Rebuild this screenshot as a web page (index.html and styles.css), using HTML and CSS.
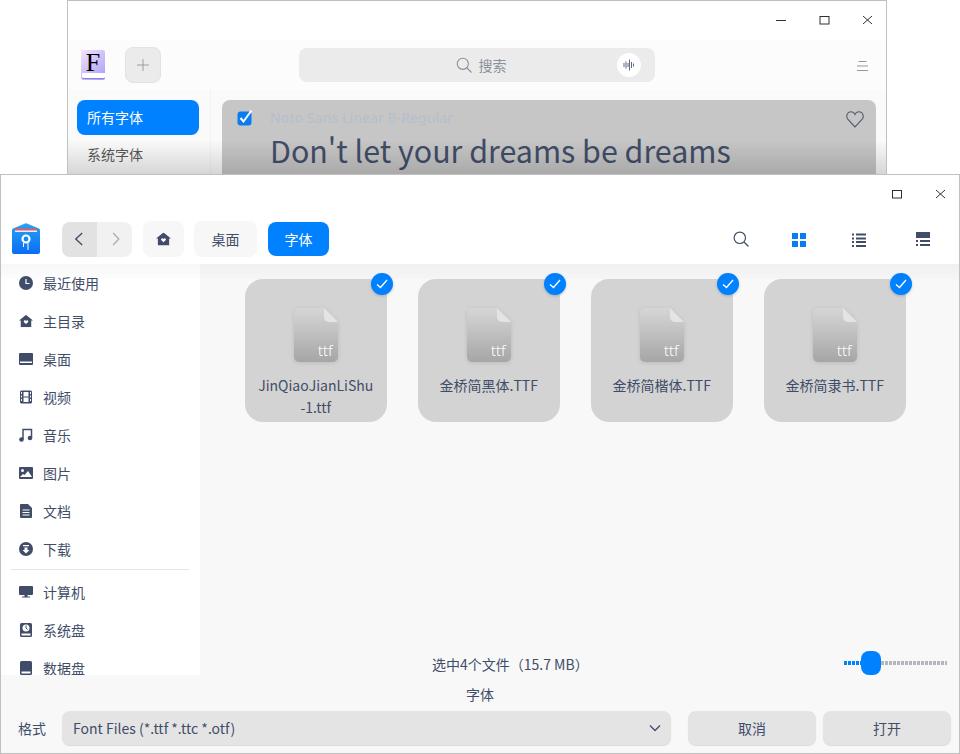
FILE: index.html
```html
<!DOCTYPE html>
<html lang="zh">
<head>
    <meta charset="utf-8">
    <title>字体管理器</title>
    <link rel="stylesheet" href="styles.css">
</head>
<body>
<svg class="defs" width="0" height="0">
    <defs>
        <linearGradient id="ttf-grad" x1="0" y1="0" x2="0" y2="1"><stop offset="0" stop-color="#d6d6d6"/><stop offset="1" stop-color="#a6a6a6"/></linearGradient>
        <linearGradient id="fold" x1="0" y1="0" x2="0" y2="1"><stop offset="0" stop-color="#26a4f0"/><stop offset="1" stop-color="#0a6cf5"/></linearGradient>
    </defs>
    <symbol id="i-home" viewBox="0 0 16 14"><path d="M8 0l8 6.500h-2V14H2V6.500H0Z" fill="#414d68"/><path d="M8 10.500L5.500 8C5 6.500 7 5.500 8 7c1-1.500 3-.5 2.500 1Z" fill="#fff"/></symbol>
    <symbol id="i-ttf" viewBox="0 0 44 54"><path d="M5 0H30L44 14V49a5 5 0 0 1-5 5H5a5 5 0 0 1-5-5V5a5 5 0 0 1 5-5Z" fill="url(#ttf-grad)"/><path d="M30 0L44 14H35a5 5 0 0 1-5-5Z" fill="#e4e4e4"/></symbol>
    <symbol id="i-tick" viewBox="0 0 12 10"><path d="M1 5.500l3.500 3L11 1" fill="none" stroke="#fff" stroke-width="1.300"/></symbol>
</svg>

<div class="window back">
    <div class="titlebar">
        <svg class="winbtn" viewBox="0 0 12 12"><path d="M0 5.500h10" class="st"/></svg>
        <svg class="winbtn" viewBox="0 0 12 12"><rect x="1" y="1.500" width="9" height="7.500" class="st"/></svg>
        <svg class="winbtn" viewBox="0 0 12 12"><path d="M1 1l9 8M10 1l-9 8" class="st"/></svg>
    </div>
    <div class="fm-toolbar">
        <div class="f-logo"><span>F</span></div>
        <div class="add-btn"><svg viewBox="0 0 12 12" width="12" height="12"><path d="M6 0v12M0 6h12" stroke="#9a9ea6" fill="none"/></svg></div>
        <div class="search-box">
            <svg viewBox="0 0 16 16" width="16" height="16"><circle cx="6.800" cy="6.800" r="5.600" fill="none" stroke="#8b919c" stroke-width="1.100"/><path d="M11 11l4.500 4.500" stroke="#8b919c" stroke-width="1.100"/></svg>
            <span>搜索</span>
            <div class="voice"><svg viewBox="0 0 12 12" width="12" height="12"><path d="M1 4v4M3 2.500v7M5 4v4M6.500 0.500v11M8.500 3v6M10.500 4.500v3" stroke="#5f6b80" fill="none"/></svg></div>
        </div>
        <svg class="menu-icon" viewBox="0 0 12 12" width="12" height="12"><path d="M1.500 1.500h8M0 6h11M0 10.500h11" stroke="#9398a2" fill="none"/></svg>
    </div>
    <div class="fm-body">
        <div class="fm-side">
            <div class="fm-item active">所有字体</div>
            <div class="fm-item">系统字体</div>
        </div>
        <div class="fm-main">
            <div class="font-card">
                <svg class="check" viewBox="0 0 16 16" width="16" height="17"><rect x="0.500" y="2" width="14" height="14" rx="3" fill="#0a7cf0"/><path d="M3.500 8.500l3 3.500L14.500 1" stroke="#fff" stroke-width="2" fill="none"/></svg>
                <div class="font-name">Noto Sans Linear B-Regular</div>
                <div class="font-demo">Don't let your dreams be dreams</div>
                <svg class="heart" viewBox="0 0 18 18" width="18" height="18"><path d="M9 17L2 9.500C0 7 0.500 3.500 3 2.200 5.300 1 7.800 2 9 4.500 10.200 2 12.700 1 15 2.200 17.500 3.500 18 7 16 9.500Z" fill="none" stroke="#555b6e" stroke-width="1.100"/></svg>
            </div>
        </div>
        <div class="fm-shade"></div>
    </div>
</div>

<div class="window front">
    <div class="titlebar front-title">
        <svg class="winbtn" viewBox="0 0 12 12"><rect x="1.500" y="1.500" width="9" height="7.500" class="st"/></svg>
        <svg class="winbtn" viewBox="0 0 12 12"><path d="M1 1l9 8M10 1l-9 8" class="st"/></svg>
    </div>
    <div class="toolbar">
        <svg class="app-icon" viewBox="0 0 28 31" width="28" height="31">
            <path d="M0 7Q0 6 1 5.500L13 0.500Q14 0 15 0.500L27 5.500Q28 6 28 7V29a2 2 0 0 1-2 2H2a2 2 0 0 1-2-2Z" fill="url(#fold)"/>
            <path d="M3 5.500h22v3H3z" fill="#e9566d"/>
            <path d="M3 7.500h22v1.500H3z" fill="#e8eef8"/>
            <circle cx="14" cy="16" r="3.500" fill="none" stroke="#fff" stroke-width="2.200"/>
            <path d="M11.500 20v4M16 20v7" stroke="#fff"/>
        </svg>
        <div class="nav-group">
            <div class="nav-btn on"><svg viewBox="0 0 10 14" width="10" height="14"><path d="M7.200 1L0.800 7l6.400 6" fill="none" stroke="#414d68" stroke-width="1.300"/></svg></div>
            <div class="nav-btn"><svg viewBox="0 0 10 14" width="10" height="14"><path d="M3.200 1l5.600 6-5.600 6" fill="none" stroke="#a9adb6" stroke-width="1.300"/></svg></div>
        </div>
        <div class="crumb home"><svg viewBox="0 0 16 14" width="15" height="14"><use href="#i-home"/></svg></div>
        <div class="crumb">桌面</div>
        <div class="crumb current">字体</div>
        <div class="view-tools">
            <svg viewBox="0 0 16 16" width="16" height="16"><circle cx="6.800" cy="6.800" r="5.700" fill="none" stroke="#414d68" stroke-width="1.200"/><path d="M11 11l4.500 4.500" stroke="#414d68" stroke-width="1.200"/></svg>
            <svg class="tool-grid" viewBox="0 0 14 14" width="14" height="14"><path d="M0 0h6v6H0zM8 0h6v6H8zM0 8h6v6H0zM8 8h6v6H8z" fill="#0a7cf0"/></svg>
            <svg class="tool-list" viewBox="0 0 14 14" width="14" height="14"><path d="M0 0.500h2v2H0zM4 0.500h10v2H4zM0 4.500h2v2H0zM4 4.500h10v2H4zM0 8h2v2H0zM4 8h10v2H4zM0 12h2v2H0zM4 12h10v2H4z" fill="#414d68"/></svg>
            <svg class="tool-rows" viewBox="0 0 14 14" width="14" height="14"><path d="M0 0h14v6H0zM0 8h2v2H0zM4 8h10v2H4zM0 12h2v2H0zM4 12h10v2H4z" fill="#414d68"/></svg>
        </div>
    </div>

    <div class="content">
        <div class="side-col">
            <ul class="side-list">
                <li><svg viewBox="0 0 14 14"><circle cx="7" cy="7" r="7" fill="#414d68"/><path d="M7 3v4.500h3.500" stroke="#fff" stroke-width="1.200" fill="none"/></svg>最近使用</li>
                <li><svg viewBox="0 0 16 14"><use href="#i-home"/></svg>主目录</li>
                <li><svg viewBox="0 0 14 12"><path d="M1 0h12a1 1 0 0 1 1 1v10a1 1 0 0 1-1 1H1a1 1 0 0 1-1-1V1a1 1 0 0 1 1-1Z" fill="#414d68"/><path d="M1 8.500h12v1.500H1z" fill="#fff"/></svg>桌面</li>
                <li><svg viewBox="0 0 12 14"><rect width="12" height="13" y="0.500" rx="1.500" fill="#414d68"/><path d="M1 2h1v2H1zM1 5.500h1v2H1zM1 9h1v2H1zM10 2h1v2h-1zM10 5.500h1v2h-1zM10 9h1v2h-1z M3.500 2h5v4.500h-5z M3.500 7.500h5V12h-5z" fill="#fff"/></svg>视频</li>
                <li><svg viewBox="0 0 14 14"><path d="M4 11V1.500h8.500V10" fill="none" stroke="#414d68" stroke-width="1.500"/><circle cx="2.500" cy="11.500" r="2.300" fill="#414d68"/><circle cx="11" cy="10" r="2.300" fill="#414d68"/></svg>音乐</li>
                <li><svg viewBox="0 0 14 12"><rect width="14" height="12" rx="1" fill="#414d68"/><circle cx="3.500" cy="3.500" r="1.500" fill="#fff"/><path d="M1 10l3-3 1.500 1L9 4l4 6Z" fill="#fff"/></svg>图片</li>
                <li><svg viewBox="0 0 12 14"><path d="M1 0h7l4 4v9a1 1 0 0 1-1 1H1a1 1 0 0 1-1-1V1a1 1 0 0 1 1-1Z" fill="#414d68"/><path d="M2.500 6h7M2.500 8.500h7M2.500 11h7" stroke="#fff"/></svg>文档</li>
                <li><svg viewBox="0 0 14 14"><circle cx="7" cy="7" r="7" fill="#414d68"/><path d="M4 3h6v1.200H4zM5.500 5.500h3V8H10.500L7 11.500 3.500 8h2Z" fill="#fff"/></svg>下载</li>
                <li class="rule"></li>
                <li><svg viewBox="0 0 14 12"><path d="M1 0h12a1 1 0 0 1 1 1v7a1 1 0 0 1-1 1H1a1 1 0 0 1-1-1V1a1 1 0 0 1 1-1Z" fill="#414d68"/><path d="M5.500 9h3v1.500H11v1H3v-1h2.500Z" fill="#414d68"/></svg>计算机</li>
                <li><svg viewBox="0 0 12 14"><rect width="12" height="14" rx="1.500" fill="#414d68"/><circle cx="6" cy="5" r="3.500" fill="#fff"/><path d="M6 2.500V5l1.500 1.500" stroke="#414d68" fill="none"/><path d="M1.500 10.500h9v2h-9z" fill="#fff"/></svg>系统盘</li>
                <li><svg viewBox="0 0 12 14"><rect width="12" height="14" rx="1.500" fill="#414d68"/><path d="M1.500 10.500h9v2h-9z" fill="#fff"/></svg>数据盘</li>
            </ul>
        </div>
        <div class="files">
            <div class="file-grid">
                <div class="file-tile">
                    <div class="tick"><svg width="12" height="10"><use href="#i-tick"/></svg></div>
                    <div class="file-icon"><svg width="44" height="54"><use href="#i-ttf"/></svg><span>ttf</span></div>
                    <div class="file-name">JinQiaoJianLiShu<br>-1.ttf</div>
                </div>
                <div class="file-tile">
                    <div class="tick"><svg width="12" height="10"><use href="#i-tick"/></svg></div>
                    <div class="file-icon"><svg width="44" height="54"><use href="#i-ttf"/></svg><span>ttf</span></div>
                    <div class="file-name">金桥简黑体.TTF</div>
                </div>
                <div class="file-tile">
                    <div class="tick"><svg width="12" height="10"><use href="#i-tick"/></svg></div>
                    <div class="file-icon"><svg width="44" height="54"><use href="#i-ttf"/></svg><span>ttf</span></div>
                    <div class="file-name">金桥简楷体.TTF</div>
                </div>
                <div class="file-tile">
                    <div class="tick"><svg width="12" height="10"><use href="#i-tick"/></svg></div>
                    <div class="file-icon"><svg width="44" height="54"><use href="#i-ttf"/></svg><span>ttf</span></div>
                    <div class="file-name">金桥简隶书.TTF</div>
                </div>
            </div>
            <div class="status">
                <span class="status-text">选中4个文件（15.7 MB）</span>
                <div class="slider">
                    <div class="track done"></div>
                    <div class="thumb"></div>
                    <div class="track"></div>
                </div>
            </div>
        </div>
        <div class="top-shade"></div>
    </div>

    <div class="footer">
        <div class="save-name">字体</div>
        <div class="footer-row">
            <span class="format-label">格式</span>
            <div class="select">Font Files (*.ttf *.ttc *.otf)
                <svg viewBox="0 0 12 8" width="12" height="8"><path d="M1 1.500l5 5 5-5" fill="none" stroke="#414d68" stroke-width="1.300"/></svg>
            </div>
            <button class="btn">取消</button>
            <button class="btn">打开</button>
        </div>
    </div>
</div>
</body>
</html>
```

FILE: styles.css
```css
* {
    box-sizing: border-box;
}

body {
    margin: 0;
    height: 754px;
    position: relative;
    overflow: hidden;
    background-color: #fff;
    font-family: "Noto Sans CJK SC", "Noto Sans", sans-serif;
    font-size: 14px;
    color: #414d68;
}

.defs {
    position: absolute;
}

.window {
    position: absolute;
    background-color: #fff;
    border: 1px solid #c0c0c0;
    overflow: hidden;
}

.back {
    left: 67px;
    top: 0;
    width: 820px;
    height: 175px;
}

.front {
    left: 0;
    top: 174px;
    width: 960px;
    height: 580px;
    display: flex;
    flex-direction: column;
}

.st {
    fill: none;
    stroke: #303030;
    stroke-width: 1;
}

.titlebar {
    height: 39px;
    display: flex;
    justify-content: flex-end;
    align-items: center;
    gap: 31px;
    padding-right: 12px;
    flex-shrink: 0;
}

.winbtn {
    width: 12px;
    height: 12px;
}

.front-title {
    height: 40px;
    padding-right: 12px;
    gap: 32px;
}

/* font manager behind the dialog */
.fm-toolbar {
    height: 50px;
    background-color: #fcfcfc;
    position: relative;
    display: flex;
    align-items: center;
}

.f-logo {
    position: relative;
    width: 24px;
    height: 30px;
    margin-left: 13px;
    border-radius: 2px;
    background: linear-gradient(135deg, #f3e4fc, #a99cf5);
    text-align: center;
    font-family: "Liberation Serif", serif;
    font-size: 26px;
    line-height: 25px;
    color: #000;
}

.f-logo::after {
    content: "";
    position: absolute;
    left: 1px;
    right: 0;
    bottom: 1px;
    height: 5px;
    background-color: #fff;
    border-bottom: 1px solid #8f7fe0;
    border-radius: 0 0 2px 2px;
}

.add-btn {
    width: 36px;
    height: 36px;
    margin-left: 20px;
    border-radius: 8px;
    background-color: #ebebeb;
    border: 1px solid #e2e2e2;
    display: flex;
    align-items: center;
    justify-content: center;
}

.search-box {
    position: absolute;
    left: 231px;
    top: 8px;
    width: 356px;
    height: 34px;
    padding-left: 8px;
    border-radius: 8px;
    background-color: #ebebeb;
    display: flex;
    align-items: center;
    justify-content: center;
    gap: 7px;
    color: #8c929c;
}

.voice {
    position: absolute;
    right: 14px;
    top: 5px;
    width: 24px;
    height: 24px;
    border-radius: 50%;
    background-color: #fff;
    display: flex;
    align-items: center;
    justify-content: center;
}

.menu-icon {
    position: absolute;
    right: 17px;
    top: 20px;
}

.fm-body {
    display: flex;
    height: 85px;
    position: relative;
    background-color: #fafafa;
}

.fm-side {
    width: 143px;
    padding: 10px 11px 0 9px;
    border-right: 1px solid #f2f2f2;
    flex-shrink: 0;
}

.fm-item {
    height: 35px;
    line-height: 35px;
    padding-left: 10px;
    border-radius: 8px;
    font-size: 14px;
    color: #5a5a5a;
}

.fm-item.active {
    background-color: #0081ff;
    color: #fff;
    margin-bottom: 2px;
}

.fm-main {
    flex: 1;
    padding: 10px 10px 0 11px;
}

.font-card {
    position: relative;
    height: 80px;
    border-radius: 8px 8px 0 0;
    background-color: #c6c6c6;
    padding: 7px 0 0 48px;
}

.check {
    position: absolute;
    left: 15px;
    top: 9px;
}

.font-name {
    font-family: "Noto Sans", sans-serif;
    font-size: 14px;
    font-weight: 500;
    line-height: 22px;
    color: #b7c0ca;
}

.font-demo {
    font-family: "Noto Sans CJK SC", sans-serif;
    font-size: 30.400px;
    line-height: 42px;
    color: #414d68;
    white-space: nowrap;
}

.heart {
    position: absolute;
    right: 12px;
    top: 10px;
}

.fm-shade {
    position: absolute;
    left: 0;
    right: 0;
    bottom: 0;
    height: 35px;
    background: linear-gradient(rgba(0, 0, 0, 0), rgba(0, 0, 0, 0.15));
}

/* file dialog */
.toolbar {
    height: 49px;
    display: flex;
    align-items: center;
    padding: 0 0 1px 11px;
    flex-shrink: 0;
    position: relative;
}

.app-icon {
    margin: -2px 22px 0 0;
}

.nav-group {
    display: flex;
    width: 70px;
    height: 35px;
    border-radius: 8px;
    overflow: hidden;
    background-color: #f1f1f1;
    margin-right: 11px;
}

.nav-btn {
    width: 35px;
    display: flex;
    align-items: center;
    justify-content: center;
}

.nav-btn.on {
    background-color: #e2e2e2;
}

.crumb {
    width: 63px;
    height: 36px;
    line-height: 36px;
    text-align: center;
    border-radius: 8px;
    background-color: #f7f7f7;
    margin-right: 10px;
    font-size: 14px;
}

.crumb.home {
    width: 41px;
    display: flex;
    align-items: center;
    justify-content: center;
}

.crumb.current {
    width: 61px;
    height: 34px;
    line-height: 34px;
    margin-left: 1px;
    background-color: #0081ff;
    color: #fff;
}

.view-tools {
    margin-left: auto;
    display: flex;
    align-items: center;
    padding-right: 29px;
}

.tool-grid {
    margin: 2px 0 0 43px;
}

.tool-list {
    margin: 2px 0 0 46px;
}

.tool-rows {
    margin-left: 50px;
}

.content {
    flex: 1;
    display: flex;
    min-height: 0;
    position: relative;
    background-color: #f8f8f8;
}

.top-shade {
    position: absolute;
    left: 0;
    right: 0;
    top: 0;
    height: 15px;
    background: linear-gradient(rgba(0, 0, 0, 0.03), rgba(0, 0, 0, 0.01));
    pointer-events: none;
}

.side-col {
    width: 199px;
    height: 411px;
    background-color: #fff;
    overflow: hidden;
    flex-shrink: 0;
    padding-left: 10px;
}

.side-list {
    list-style: none;
    margin: 0;
    padding: 0;
}

.side-list li {
    height: 38px;
    display: flex;
    align-items: center;
    gap: 10px;
    padding-left: 8px;
    width: 178px;
    font-size: 14px;
    white-space: nowrap;
}

.side-list li svg {
    width: 14px;
    height: 14px;
    flex-shrink: 0;
}

.side-list .rule {
    height: 1px;
    background-color: #e8e8e8;
    margin: 1px 0 3px;
    padding: 0;
}

.files {
    flex: 1;
    display: flex;
    flex-direction: column;
    position: relative;
}

.file-grid {
    flex: 1;
    display: flex;
    gap: 30.500px;
    padding: 15px 0 0 44.500px;
    align-items: flex-start;
}

.file-tile {
    position: relative;
    width: 142.500px;
    height: 143px;
    border-radius: 18px;
    background-color: #d3d3d3;
    padding-top: 29px;
    text-align: center;
}

.tick {
    position: absolute;
    right: -5.500px;
    top: -6px;
    width: 22px;
    height: 22px;
    border-radius: 50%;
    background-color: #0081ff;
    box-shadow: 0 1px 3px rgba(0, 0, 0, 0.2);
    display: flex;
    align-items: center;
    justify-content: center;
}

.file-icon {
    position: relative;
    width: 44px;
    height: 54px;
    margin: 0 auto;
    filter: drop-shadow(0 1px 2px rgba(0, 0, 0, 0.1));
}

.file-icon svg {
    display: block;
}

.file-icon span {
    position: absolute;
    right: 5px;
    bottom: 3px;
    color: #fff;
    font-family: "Noto Sans", sans-serif;
    font-size: 15px;
    font-weight: 300;
    line-height: 18px;
}

.file-name {
    margin-top: 12px;
    font-size: 14px;
    line-height: 22px;
    color: #414d68;
}

.status {
    height: 25px;
    position: absolute;
    left: 0;
    right: 0;
    bottom: 0;
    display: flex;
    align-items: center;
}

.status-text {
    position: absolute;
    left: 232px;
    margin-top: 3px;
    font-size: 14px;
    line-height: 20px;
}

.slider {
    position: absolute;
    right: 12px;
    width: 103px;
    display: flex;
    align-items: center;
}

.track {
    flex: 1;
    height: 4px;
    background-image: repeating-linear-gradient(90deg, #b4b6be 0 3px, transparent 3px 4px);
}

.track.done {
    flex: none;
    width: 17px;
    background-image: repeating-linear-gradient(90deg, #0081ff 0 3px, transparent 3px 4px);
}

.thumb {
    width: 20px;
    height: 24px;
    border-radius: 8px;
    background-color: #0081ff;
    flex-shrink: 0;
}

.footer {
    height: 78px;
    background-color: #f8f8f8;
    flex-shrink: 0;
    text-align: center;
}

.save-name {
    height: 36px;
    line-height: 38px;
    font-size: 14px;
}

.footer-row {
    display: flex;
    align-items: center;
    padding-left: 17px;
    height: 34px;
}

.format-label {
    width: 44px;
    text-align: left;
    font-size: 14px;
}

.select {
    width: 609px;
    height: 34px;
    margin-right: 17px;
    padding: 0 10px 0 11px;
    border-radius: 8px;
    background-color: #e4e4e4;
    box-shadow: 0 1px 1px rgba(0, 0, 0, 0.12);
    display: flex;
    align-items: center;
    justify-content: space-between;
    font-size: 14px;
}

.btn {
    width: 128px;
    height: 34px;
    border: 0;
    border-radius: 8px;
    background-color: #e4e4e4;
    box-shadow: 0 1px 1px rgba(0, 0, 0, 0.12);
    color: #414d68;
    font-family: inherit;
    font-size: 14px;
    padding: 0;
}

.btn + .btn {
    margin-left: 7px;
}
```
